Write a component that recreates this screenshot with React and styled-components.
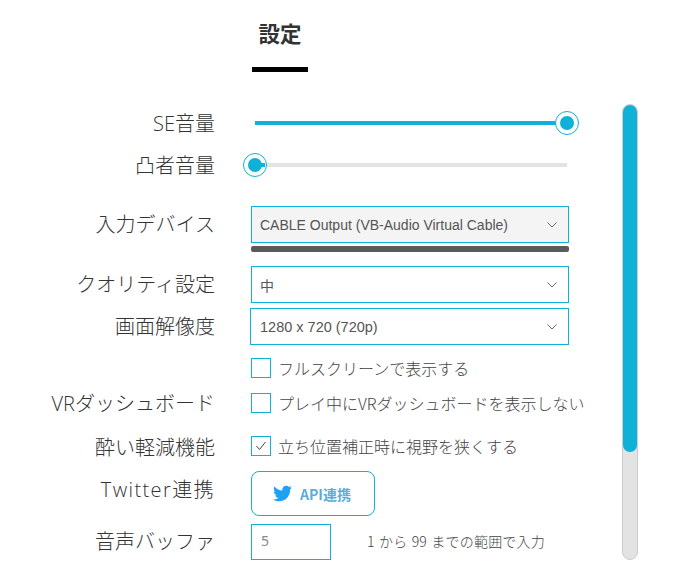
import React from "react";
import styled, { createGlobalStyle } from "styled-components";
import { FaTwitter } from "react-icons/fa";

const cyan = "#0fb1d8";

const GlobalStyle = createGlobalStyle`
  html, body {
    margin: 0;
    padding: 0;
    background: #fff;
    overflow: hidden;
  }
  body {
    font-family: "Noto Sans CJK JP", "Noto Sans", sans-serif;
    color: #444;
  }
`;

const Page = styled.div`
  display: flex;
  width: 686px;
  height: 566px;
`;

const Main = styled.main`
  width: 622px;
  flex: none;
`;

const Header = styled.header`
  height: 104px;
  padding-left: 252px;
  box-sizing: border-box;
`;

const Title = styled.h1`
  margin: 0;
  width: 56px;
  height: 72px;
  box-sizing: border-box;
  padding-top: 17px;
  border-bottom: 5px solid #000;
  font-size: 21.5px;
  line-height: 32px;
  font-weight: 700;
  text-align: center;
  color: #333;
`;

const Row = styled.div`
  display: flex;
  align-items: ${(p) => p.$align || "center"};
  margin-top: ${(p) => p.$mt || 0}px;
  height: ${(p) => p.$h}px;
`;

const Label = styled.div`
  width: 215px;
  flex: none;
  padding-top: ${(p) => p.$pt || 0}px;
  text-align: right;
  font-family: "Open Sans", "Noto Sans CJK JP", sans-serif;
  font-size: 20px;
  font-weight: 300;
  letter-spacing: ${(p) => p.$ls || 0}px;
  line-height: ${(p) => p.$lh || 24}px;
  color: #333;
  white-space: nowrap;
`;

const Control = styled.div`
  flex: none;
  margin-left: ${(p) => (p.$shift ? 35 : 36)}px;
  width: ${(p) => (p.$shift ? 319 : 318)}px;
`;

const SliderBox = styled.div`
  position: relative;
  height: 4px;
  width: 312px;
  margin-left: 4px;
  background: #e3e3e3;
`;

const SliderFill = styled.div`
  height: 100%;
  background: ${cyan};
`;

const Thumb = styled.span`
  position: absolute;
  top: -10px;
  left: ${(p) => p.$left}px;
  width: 24px;
  height: 24px;
  box-sizing: border-box;
  border: 1px solid ${cyan};
  border-radius: 50%;
  background: #fff;
  &::after {
    content: "";
    position: absolute;
    top: 4px;
    left: 4px;
    width: 14px;
    height: 14px;
    border-radius: 50%;
    background: ${cyan};
  }
`;

const ThumbStub = styled.span`
  position: absolute;
  top: 0;
  left: 0;
  width: 10px;
  height: 4px;
  background: ${cyan};
  z-index: 1;
`;

const Select = styled.div`
  display: flex;
  align-items: center;
  justify-content: space-between;
  box-sizing: border-box;
  height: 37px;
  padding: 0 9px 0 ${(p) => p.$pad || 8}px;
  border: 1px solid ${cyan};
  background: ${(p) => (p.$active ? "#f4f4f4" : "#fff")};
  font-family: "Liberation Sans", "Noto Sans CJK JP", sans-serif;
  font-size: ${(p) => p.$size || 14}px;
  font-weight: 400;
  color: #555;
`;

const Chevron = styled.svg`
  width: 12px;
  height: 8px;
  margin-right: 1px;
  fill: none;
  stroke: #666;
  stroke-width: 1;
`;

const DarkBar = styled.div`
  height: 6px;
  margin-top: 3px;
  border-radius: 2px;
  background: #5a5a5a;
`;

const CheckRow = styled.label`
  display: flex;
  align-items: center;
  gap: 7px;
  font-size: 16px;
  font-weight: 300;
  color: #444;
  white-space: nowrap;
`;

const Box = styled.span`
  display: flex;
  align-items: center;
  justify-content: center;
  flex: none;
  width: 20px;
  height: 20px;
  box-sizing: border-box;
  border: 1px solid ${cyan};
`;

const CheckMark = styled.svg`
  width: 12px;
  height: 10px;
  fill: none;
  stroke: #444;
  stroke-width: 1;
`;

const ApiButton = styled.button`
  display: flex;
  align-items: center;
  justify-content: center;
  gap: 8px;
  width: 124px;
  height: 45px;
  padding: 0 2px 0 0;
  box-sizing: border-box;
  border: 1px solid ${cyan};
  border-radius: 8px;
  background: #fff;
  font-family: "Noto Sans CJK JP", sans-serif;
  font-size: 14px;
  font-weight: 700;
  color: #5aaed6;
  svg {
    width: 19px;
    height: 19px;
    color: #1da1f2;
  }
`;

const BufferRow = styled.div`
  display: flex;
  align-items: center;
`;

const NumberInput = styled.input`
  width: 80px;
  height: 36px;
  box-sizing: border-box;
  padding: 0 9px 3px;
  border: 1px solid ${cyan};
  border-radius: 0;
  outline: none;
  font-family: "Noto Sans", sans-serif;
  font-size: 14px;
  color: #888;
`;

const Hint = styled.span`
  margin: 0 0 2px 36px;
  font-size: 14px;
  font-weight: 300;
  letter-spacing: 0.2px;
  word-spacing: 1px;
  color: #444;
  white-space: nowrap;
`;

const ScrollTrack = styled.div`
  flex: none;
  width: 16px;
  height: 456px;
  margin-top: 104px;
  box-sizing: border-box;
  border: 1px solid #ccc;
  border-radius: 8px;
  background: #e3e3e3;
`;

const ScrollThumb = styled.div`
  height: 347px;
  border-radius: 7px;
  background: ${cyan};
`;

const ChevronIcon = () => (
  <Chevron viewBox="0 0 12 8">
    <path d="M1.5 1.5 L6 6 L10.5 1.5" />
  </Chevron>
);

const Check = ({ checked, children }) => (
  <CheckRow>
    <Box>
      {checked && (
        <CheckMark viewBox="0 0 12 10">
          <path d="M1.5 5 L4.5 8.5 L10.5 1" />
        </CheckMark>
      )}
    </Box>
    {children}
  </CheckRow>
);

const App = () => (
  <>
    <GlobalStyle />
    <Page>
      <Main>
        <Header>
          <Title>設定</Title>
        </Header>
        <Row $h={38}>
          <Label $pt={2}>SE音量</Label>
          <Control>
            <SliderBox>
              <SliderFill />
              <Thumb $left={300} />
            </SliderBox>
          </Control>
        </Row>
        <Row $h={38} $mt={4}>
          <Label $pt={2}>凸者音量</Label>
          <Control>
            <SliderBox>
              <ThumbStub />
              <Thumb $left={-12} />
            </SliderBox>
          </Control>
        </Row>
        <Row $h={46} $mt={22} $align="flex-start">
          <Label $lh={37}>入力デバイス</Label>
          <Control>
            <Select $active>
              CABLE Output (VB-Audio Virtual Cable)
              <ChevronIcon />
            </Select>
            <DarkBar />
          </Control>
        </Row>
        <Row $h={37} $mt={14}>
          <Label>クオリティ設定</Label>
          <Control>
            <Select>
              中
              <ChevronIcon />
            </Select>
          </Control>
        </Row>
        <Row $h={37} $mt={5}>
          <Label>画面解像度</Label>
          <Control $shift>
            <Select $size={14.5} $pad={9}>
              1280 x 720 (720p)
              <ChevronIcon />
            </Select>
          </Control>
        </Row>
        <Row $h={20} $mt={13}>
          <Label />
          <Control>
            <Check>フルスクリーンで表示する</Check>
          </Control>
        </Row>
        <Row $h={20} $mt={15}>
          <Label $pt={2}>VRダッシュボード</Label>
          <Control>
            <Check>プレイ中にVRダッシュボードを表示しない</Check>
          </Control>
        </Row>
        <Row $h={20} $mt={23}>
          <Label $pt={3}>酔い軽減機能</Label>
          <Control>
            <Check checked>立ち位置補正時に視野を狭くする</Check>
          </Control>
        </Row>
        <Row $h={45} $mt={15} $align="flex-start">
          <Label $lh={36} $pt={1} $ls={1.4}>Twitter連携</Label>
          <Control>
            <ApiButton>
              <FaTwitter />
              API連携
            </ApiButton>
          </Control>
        </Row>
        <Row $h={36} $mt={8}>
          <Label>音声バッファ</Label>
          <Control>
            <BufferRow>
              <NumberInput type="text" value="5" readOnly />
              <Hint>1 から 99 までの範囲で入力</Hint>
            </BufferRow>
          </Control>
        </Row>
      </Main>
      <ScrollTrack>
        <ScrollThumb />
      </ScrollTrack>
    </Page>
  </>
);

export default App;
